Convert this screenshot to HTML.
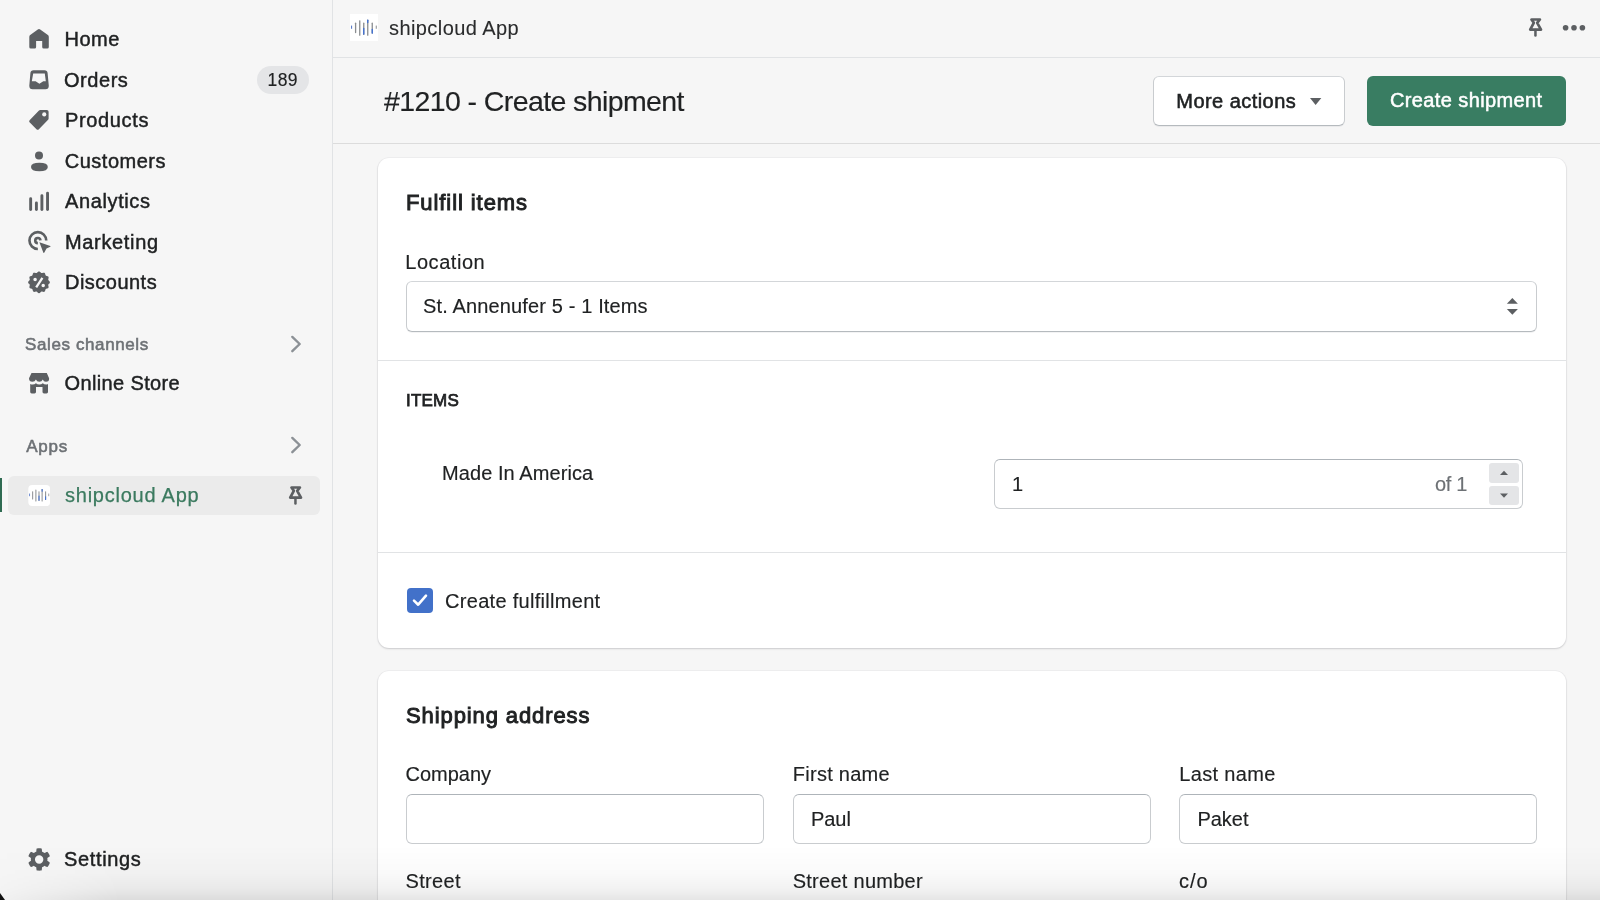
<!DOCTYPE html>
<html><head><meta charset="utf-8">
<style>
*{margin:0;padding:0;box-sizing:border-box}
html,body{width:1600px;height:900px;overflow:hidden;-webkit-font-smoothing:antialiased;background:#f6f6f6;font-family:"Liberation Sans",sans-serif;color:#202223}
.a{position:absolute}
.t{position:absolute;white-space:nowrap;line-height:1;-webkit-text-stroke:0.15px currentColor}
.nav{-webkit-text-stroke:0.45px currentColor}
.f20{font-size:20px}
#side{left:0;top:0;width:333px;height:900px;background:#f6f6f6;border-right:1px solid #e1e3e5}
#topbar{left:333px;top:0;width:1267px;height:58px;border-bottom:1px solid #e1e3e5}
#phead{left:333px;top:58px;width:1267px;height:86px;border-bottom:1px solid #dcdcdc}
.ico{position:absolute;left:29px;width:20px;height:20px}
.card{position:absolute;background:#fff;border-radius:11px;box-shadow:0 0 0 1px rgba(63,63,68,.04),0 1px 2px 0 rgba(63,63,68,.2)}
.inp{position:absolute;background:#fff;border:1px solid #c9cccf;border-top-color:#aeb4b9;border-radius:6px}
.lbl{font-size:20px}
</style></head><body><div id="root" style="position:absolute;left:0;top:0;width:1600px;height:900px;will-change:transform">

<!-- SIDEBAR -->
<div id="side" class="a">

  <svg class="a" style="left:29px;top:29px" width="20" height="20" viewBox="0 0 20 20"><path fill="#5c5f62" d="M0.3,8 Q0.3,6.8 1.2,6.1 L8.8,0.5 Q10,-0.3 11.2,0.5 L18.9,6.1 Q19.8,6.8 19.8,8 V18 Q19.8,19.5 18.3,19.5 H14.7 Q13.2,19.5 13.2,18 V12 H7.1 V18 Q7.1,19.5 5.6,19.5 H1.8 Q0.3,19.5 0.3,18 Z"/></svg>
  <svg class="a" style="left:29px;top:69.5px" width="20" height="20" viewBox="0 0 20 20"><path fill="#5c5f62" fill-rule="evenodd" d="M4.5,0.3 H15.5 Q18.3,0.3 18.6,3 L19.8,15.8 Q19.8,19.3 16.5,19.3 H3.6 Q0.3,19.3 0.3,15.8 L1.4,3 Q1.7,0.3 4.5,0.3 Z M4.2,3.4 H15.8 L16.8,11.3 H14.3 L10.4,13.8 L6.6,11.3 H2.8 Z"/></svg>
  <svg class="a" style="left:29.3px;top:110px" width="19.6" height="20" viewBox="1 1 18 18" preserveAspectRatio="none"><path fill="#5c5f62" stroke="#5c5f62" stroke-width="3.2" stroke-linejoin="round" d="M11.3,2.6 H17.4 V8.7 L8.98,17.12 L2.88,11.02 Z"/><circle cx="15" cy="5" r="1.9" fill="#f6f6f6"/></svg>
  <svg class="a" style="left:29px;top:150.5px" width="20" height="21" viewBox="0 0 20 21"><circle cx="10" cy="4.5" r="4" fill="#5c5f62"/><path fill="#5c5f62" d="M2,16 Q2,11.8 10.4,11.8 Q18.8,11.8 18.8,16 Q18.8,20.2 10.4,20.2 Q2,20.2 2,16 Z"/></svg>
  <svg class="a" style="left:29px;top:191px" width="21" height="21" viewBox="0 0 21 21"><g stroke="#5c5f62" stroke-width="2.9" stroke-linecap="round"><line x1="1.65" y1="7.7" x2="1.65" y2="18.6"/><line x1="7.4" y1="11.9" x2="7.4" y2="18.6"/><line x1="12.9" y1="4.7" x2="12.9" y2="18.6"/><line x1="18.55" y1="2.3" x2="18.55" y2="18.6"/></g></svg>
  <svg class="a" style="left:27px;top:229px" width="26" height="26" viewBox="0 0 26 26"><g fill="none" stroke="#5c5f62" stroke-width="2.6"><path d="M19.25,11.56 A8.4,8.4 0 1 0 10.85,19.96"/><path d="M13.45,11.3 A2.6,2.6 0 1 0 10.85,14.16"/></g><path fill="#5c5f62" d="M12.4,13.3 L23.3,17 Q23.9,17.3 23.3,17.8 L19.5,19.6 L17.2,23.7 Q16.6,24.2 16.3,23.6 Z"/></svg>
  <svg class="a" style="left:27px;top:270px" width="24" height="24" viewBox="0 0 24 24"><path fill="#5c5f62" fill-rule="evenodd" d="M12.00,1.40 L12.28,1.44 L12.56,1.54 L12.83,1.70 L13.09,1.91 L13.34,2.14 L13.57,2.37 L13.80,2.60 L14.02,2.79 L14.25,2.93 L14.48,3.03 L14.74,3.06 L15.00,3.05 L15.29,3.00 L15.60,2.92 L15.92,2.83 L16.25,2.75 L16.58,2.70 L16.89,2.70 L17.19,2.75 L17.45,2.86 L17.68,3.03 L17.87,3.26 L18.02,3.54 L18.14,3.85 L18.24,4.17 L18.32,4.49 L18.41,4.80 L18.51,5.07 L18.63,5.31 L18.79,5.51 L18.99,5.67 L19.23,5.79 L19.50,5.89 L19.81,5.98 L20.13,6.06 L20.45,6.16 L20.76,6.28 L21.04,6.43 L21.27,6.62 L21.44,6.85 L21.55,7.11 L21.60,7.41 L21.60,7.72 L21.55,8.05 L21.47,8.38 L21.38,8.70 L21.30,9.01 L21.25,9.30 L21.24,9.56 L21.27,9.82 L21.37,10.05 L21.51,10.28 L21.70,10.50 L21.93,10.73 L22.16,10.96 L22.39,11.21 L22.60,11.47 L22.76,11.74 L22.86,12.02 L22.90,12.30 L22.86,12.58 L22.76,12.86 L22.60,13.13 L22.39,13.39 L22.16,13.64 L21.93,13.87 L21.70,14.10 L21.51,14.32 L21.37,14.55 L21.27,14.78 L21.24,15.04 L21.25,15.30 L21.30,15.59 L21.38,15.90 L21.47,16.22 L21.55,16.55 L21.60,16.88 L21.60,17.19 L21.55,17.49 L21.44,17.75 L21.27,17.98 L21.04,18.17 L20.76,18.32 L20.45,18.44 L20.13,18.54 L19.81,18.62 L19.50,18.71 L19.23,18.81 L18.99,18.93 L18.79,19.09 L18.63,19.29 L18.51,19.53 L18.41,19.80 L18.32,20.11 L18.24,20.43 L18.14,20.75 L18.02,21.06 L17.87,21.34 L17.68,21.57 L17.45,21.74 L17.19,21.85 L16.89,21.90 L16.58,21.90 L16.25,21.85 L15.92,21.77 L15.60,21.68 L15.29,21.60 L15.00,21.55 L14.74,21.54 L14.48,21.57 L14.25,21.67 L14.02,21.81 L13.80,22.00 L13.57,22.23 L13.34,22.46 L13.09,22.69 L12.83,22.90 L12.56,23.06 L12.28,23.16 L12.00,23.20 L11.72,23.16 L11.44,23.06 L11.17,22.90 L10.91,22.69 L10.66,22.46 L10.43,22.23 L10.20,22.00 L9.98,21.81 L9.75,21.67 L9.52,21.57 L9.26,21.54 L9.00,21.55 L8.71,21.60 L8.40,21.68 L8.08,21.77 L7.75,21.85 L7.42,21.90 L7.11,21.90 L6.81,21.85 L6.55,21.74 L6.32,21.57 L6.13,21.34 L5.98,21.06 L5.86,20.75 L5.76,20.43 L5.68,20.11 L5.59,19.80 L5.49,19.53 L5.37,19.29 L5.21,19.09 L5.01,18.93 L4.77,18.81 L4.50,18.71 L4.19,18.62 L3.87,18.54 L3.55,18.44 L3.24,18.32 L2.96,18.17 L2.73,17.98 L2.56,17.75 L2.45,17.49 L2.40,17.19 L2.40,16.88 L2.45,16.55 L2.53,16.22 L2.62,15.90 L2.70,15.59 L2.75,15.30 L2.76,15.04 L2.73,14.78 L2.63,14.55 L2.49,14.32 L2.30,14.10 L2.07,13.87 L1.84,13.64 L1.61,13.39 L1.40,13.13 L1.24,12.86 L1.14,12.58 L1.10,12.30 L1.14,12.02 L1.24,11.74 L1.40,11.47 L1.61,11.21 L1.84,10.96 L2.07,10.73 L2.30,10.50 L2.49,10.28 L2.63,10.05 L2.73,9.82 L2.76,9.56 L2.75,9.30 L2.70,9.01 L2.62,8.70 L2.53,8.38 L2.45,8.05 L2.40,7.72 L2.40,7.41 L2.45,7.11 L2.56,6.85 L2.73,6.62 L2.96,6.43 L3.24,6.28 L3.55,6.16 L3.87,6.06 L4.19,5.98 L4.50,5.89 L4.77,5.79 L5.01,5.67 L5.21,5.51 L5.37,5.31 L5.49,5.07 L5.59,4.80 L5.68,4.49 L5.76,4.17 L5.86,3.85 L5.98,3.54 L6.13,3.26 L6.32,3.03 L6.55,2.86 L6.81,2.75 L7.11,2.70 L7.42,2.70 L7.75,2.75 L8.08,2.83 L8.40,2.92 L8.71,3.00 L9.00,3.05 L9.26,3.06 L9.52,3.03 L9.75,2.93 L9.98,2.79 L10.20,2.60 L10.43,2.37 L10.66,2.14 L10.91,1.91 L11.17,1.70 L11.44,1.54 L11.72,1.44ZM6.35,9.50 a1.75,1.75 0 1 0 3.5,0 a1.75,1.75 0 1 0 -3.5,0ZM14.45,15.50 a1.75,1.75 0 1 0 3.5,0 a1.75,1.75 0 1 0 -3.5,0ZM10.17,18.02 L16.37,8.42 L14.43,7.18 L8.23,16.78Z"/></svg>
  <svg class="a" style="left:29px;top:372px" width="21" height="22" viewBox="0 0 21 22"><path fill="#5c5f62" d="M2.5,1 H17.8 L20.1,6.3 Q20.4,9.8 17,9.8 Q14.6,9.8 13.8,7.6 Q12.8,9.8 10.3,9.8 Q7.8,9.8 6.9,7.6 Q6,9.8 3.4,9.8 Q0,9.8 0,6.3 Z"/><path fill="#5c5f62" d="M1.2,12 Q2.4,12.6 3.6,12.6 Q5.6,12.6 6.9,11.3 Q8.3,12.6 10.3,12.6 Q12.4,12.6 13.8,11.3 Q15.1,12.6 17.1,12.6 Q18.1,12.6 19,12.1 V20 Q19,21.4 17.5,21.4 H15 Q13.5,21.4 13.5,20 V15 H7 V20 Q7,21.4 5.5,21.4 H2.7 Q1.2,21.4 1.2,20 Z"/></svg>
  <svg class="a" style="left:283px;top:333px" width="22" height="22" viewBox="0 0 22 22"><path d="M9.3,3.9 L16.7,11 L9.3,18.2" fill="none" stroke="#8c9196" stroke-width="2.4" stroke-linecap="round" stroke-linejoin="round"/></svg>
  <svg class="a" style="left:283px;top:434px" width="22" height="22" viewBox="0 0 22 22"><path d="M9.3,3.9 L16.7,11 L9.3,18.2" fill="none" stroke="#8c9196" stroke-width="2.4" stroke-linecap="round" stroke-linejoin="round"/></svg>
  <div class="t f20 nav" style="left:64.6px;top:29px;letter-spacing:0.45px">Home</div>
  <div class="t f20 nav" style="left:64px;top:69.5px;letter-spacing:0.55px">Orders</div>
  <div class="t f20 nav" style="left:64.9px;top:110px;letter-spacing:0.66px">Products</div>
  <div class="t f20 nav" style="left:64.8px;top:150.5px;letter-spacing:0.5px">Customers</div>
  <div class="t f20 nav" style="left:65px;top:191px;letter-spacing:0.62px">Analytics</div>
  <div class="t f20 nav" style="left:65px;top:231.5px;letter-spacing:0.66px">Marketing</div>
  <div class="t f20 nav" style="left:65px;top:272px;letter-spacing:0.48px">Discounts</div>

  <div class="a" style="left:257px;top:66px;width:52px;height:28px;border-radius:14px;background:#e4e5e7"></div>
  <div class="t" style="left:267.6px;top:71.5px;font-size:17.5px;letter-spacing:0.4px">189</div>

  <div class="t" style="left:25px;top:336px;font-size:17px;color:#6d7175;-webkit-text-stroke:0.55px currentColor;letter-spacing:0.61px">Sales channels</div>
  <div class="t f20 nav" style="left:64.6px;top:373px;letter-spacing:0.36px">Online Store</div>
  <div class="t" style="left:26.2px;top:437.5px;font-size:17px;color:#6d7175;-webkit-text-stroke:0.55px currentColor;letter-spacing:0.75px">Apps</div>

  <div class="a" style="left:8px;top:476px;width:312px;height:39px;border-radius:6px;background:#ebebeb"></div>
  <div class="a" style="left:0;top:478px;width:2px;height:34px;background:#2f6b52"></div>
  <svg class="a" style="left:27.8px;top:484.7px" width="22.4" height="21" viewBox="0 0 28 27"><rect width="28" height="27" rx="5" fill="#fff"/><g transform="translate(0,-0.5)"><line x1="1.6" y1="12.0" x2="1.6" y2="14.4" stroke="#4a6fc4" stroke-width="1.0" stroke-linecap="round"/><line x1="5.6" y1="9.2" x2="5.6" y2="18.6" stroke="#8a8d90" stroke-width="1.3" stroke-linecap="round"/><line x1="9.75" y1="6.8" x2="9.75" y2="21.2" stroke="#8a8d90" stroke-width="1.3" stroke-linecap="round"/><line x1="13.75" y1="9.2" x2="13.75" y2="20.4" stroke="#8a8d90" stroke-width="1.3" stroke-linecap="round"/><line x1="17.75" y1="6.2" x2="17.75" y2="21.2" stroke="#8a8d90" stroke-width="1.3" stroke-linecap="round"/><line x1="22.25" y1="9.2" x2="22.25" y2="19.2" stroke="#8a8d90" stroke-width="1.3" stroke-linecap="round"/><line x1="26.25" y1="12.0" x2="26.25" y2="14.4" stroke="#8a8d90" stroke-width="1.0" stroke-linecap="round"/><line x1="13.75" y1="14.5" x2="13.75" y2="20" stroke="#3d6fd6" stroke-width="1.3" stroke-linecap="round"/><line x1="17.75" y1="6.2" x2="17.75" y2="8.5" stroke="#3d6fd6" stroke-width="1.3" stroke-linecap="round"/><line x1="22.25" y1="15.5" x2="22.25" y2="19" stroke="#3d6fd6" stroke-width="1.3" stroke-linecap="round"/></g></svg>
  <svg class="a" style="left:282px;top:480px" width="26" height="30" viewBox="0 0 26 30"><path d="M9.5,7.5 H17.9 L15.2,10.8 L19,17.6 H8.2 L11.8,10.8 Z" fill="none" stroke="#5c5f62" stroke-width="2.7" stroke-linejoin="round"/><line x1="13.45" y1="18" x2="13.45" y2="23.6" stroke="#5c5f62" stroke-width="2.5" stroke-linecap="round"/></svg>
  <div class="t f20" style="left:65px;top:485px;color:#3b7a5f;-webkit-text-stroke:0.25px currentColor;letter-spacing:0.76px">shipcloud App</div>

  <svg class="a" style="left:27px;top:847px" width="24" height="24" viewBox="0 0 24 24"><path fill="#5c5f62" fill-rule="evenodd" d="M20.45,12.44 L20.45,12.58 L20.44,12.73 L20.44,12.87 L20.43,13.02 L20.42,13.16 L20.40,13.31 L20.39,13.45 L20.37,13.60 L20.35,13.74 L20.32,13.88 L20.70,14.10 L21.08,14.34 L21.45,14.59 L21.81,14.85 L22.17,15.12 L22.52,15.41 L22.86,15.71 L22.80,15.90 L22.74,16.09 L22.67,16.27 L22.61,16.45 L22.53,16.64 L22.46,16.82 L22.38,17.00 L22.30,17.17 L22.22,17.35 L22.13,17.52 L22.04,17.70 L21.95,17.87 L21.85,18.04 L21.75,18.21 L21.65,18.38 L21.54,18.54 L21.44,18.70 L21.32,18.86 L21.21,19.02 L21.09,19.18 L20.98,19.34 L20.85,19.49 L20.73,19.64 L20.60,19.79 L20.47,19.93 L20.34,20.08 L19.91,19.93 L19.48,19.77 L19.07,19.60 L18.66,19.42 L18.26,19.22 L17.87,19.02 L17.49,18.80 L17.37,18.89 L17.26,18.98 L17.15,19.07 L17.03,19.15 L16.91,19.24 L16.79,19.32 L16.67,19.40 L16.55,19.48 L16.42,19.55 L16.30,19.63 L16.17,19.70 L16.05,19.77 L15.92,19.84 L15.79,19.90 L15.66,19.96 L15.53,20.02 L15.39,20.08 L15.26,20.14 L15.12,20.19 L14.99,20.24 L14.99,20.68 L14.97,21.12 L14.94,21.57 L14.89,22.01 L14.83,22.46 L14.76,22.91 L14.67,23.35 L14.48,23.40 L14.29,23.43 L14.09,23.47 L13.90,23.50 L13.71,23.53 L13.51,23.56 L13.32,23.58 L13.13,23.60 L12.93,23.61 L12.74,23.62 L12.54,23.63 L12.35,23.64 L12.15,23.64 L11.95,23.64 L11.76,23.63 L11.56,23.62 L11.37,23.61 L11.17,23.60 L10.98,23.58 L10.79,23.56 L10.59,23.53 L10.40,23.50 L10.21,23.47 L10.01,23.43 L9.82,23.40 L9.63,23.35 L9.54,22.91 L9.47,22.46 L9.41,22.01 L9.36,21.57 L9.33,21.12 L9.31,20.68 L9.31,20.24 L9.18,20.19 L9.04,20.14 L8.91,20.08 L8.77,20.02 L8.64,19.96 L8.51,19.90 L8.38,19.84 L8.25,19.77 L8.13,19.70 L8.00,19.63 L7.88,19.55 L7.75,19.48 L7.63,19.40 L7.51,19.32 L7.39,19.24 L7.27,19.15 L7.15,19.07 L7.04,18.98 L6.93,18.89 L6.81,18.80 L6.43,19.02 L6.04,19.22 L5.64,19.42 L5.23,19.60 L4.82,19.77 L4.39,19.93 L3.96,20.08 L3.83,19.93 L3.70,19.79 L3.57,19.64 L3.45,19.49 L3.32,19.34 L3.21,19.18 L3.09,19.02 L2.98,18.86 L2.86,18.70 L2.76,18.54 L2.65,18.38 L2.55,18.21 L2.45,18.04 L2.35,17.87 L2.26,17.70 L2.17,17.52 L2.08,17.35 L2.00,17.17 L1.92,17.00 L1.84,16.82 L1.77,16.64 L1.69,16.45 L1.63,16.27 L1.56,16.09 L1.50,15.90 L1.44,15.71 L1.78,15.41 L2.13,15.12 L2.49,14.85 L2.85,14.59 L3.22,14.34 L3.60,14.10 L3.98,13.88 L3.95,13.74 L3.93,13.60 L3.91,13.45 L3.90,13.31 L3.88,13.16 L3.87,13.02 L3.86,12.87 L3.86,12.73 L3.85,12.58 L3.85,12.44 L3.85,12.30 L3.86,12.15 L3.86,12.01 L3.87,11.86 L3.88,11.72 L3.90,11.57 L3.91,11.43 L3.93,11.28 L3.95,11.14 L3.98,11.00 L3.60,10.78 L3.22,10.54 L2.85,10.29 L2.49,10.03 L2.13,9.76 L1.78,9.47 L1.44,9.17 L1.50,8.98 L1.56,8.79 L1.63,8.61 L1.69,8.43 L1.77,8.24 L1.84,8.06 L1.92,7.88 L2.00,7.71 L2.08,7.53 L2.17,7.36 L2.26,7.18 L2.35,7.01 L2.45,6.84 L2.55,6.67 L2.65,6.50 L2.76,6.34 L2.86,6.18 L2.98,6.02 L3.09,5.86 L3.21,5.70 L3.32,5.54 L3.45,5.39 L3.57,5.24 L3.70,5.09 L3.83,4.95 L3.96,4.80 L4.39,4.95 L4.82,5.11 L5.23,5.28 L5.64,5.46 L6.04,5.66 L6.43,5.86 L6.81,6.08 L6.93,5.99 L7.04,5.90 L7.15,5.81 L7.27,5.73 L7.39,5.64 L7.51,5.56 L7.63,5.48 L7.75,5.40 L7.88,5.33 L8.00,5.25 L8.13,5.18 L8.25,5.11 L8.38,5.04 L8.51,4.98 L8.64,4.92 L8.77,4.86 L8.91,4.80 L9.04,4.74 L9.18,4.69 L9.31,4.64 L9.31,4.20 L9.33,3.76 L9.36,3.31 L9.41,2.87 L9.47,2.42 L9.54,1.97 L9.63,1.53 L9.82,1.48 L10.01,1.45 L10.21,1.41 L10.40,1.38 L10.59,1.35 L10.79,1.32 L10.98,1.30 L11.17,1.28 L11.37,1.27 L11.56,1.26 L11.76,1.25 L11.95,1.24 L12.15,1.24 L12.35,1.24 L12.54,1.25 L12.74,1.26 L12.93,1.27 L13.13,1.28 L13.32,1.30 L13.51,1.32 L13.71,1.35 L13.90,1.38 L14.09,1.41 L14.29,1.45 L14.48,1.48 L14.67,1.53 L14.76,1.97 L14.83,2.42 L14.89,2.87 L14.94,3.31 L14.97,3.76 L14.99,4.20 L14.99,4.64 L15.12,4.69 L15.26,4.74 L15.39,4.80 L15.53,4.86 L15.66,4.92 L15.79,4.98 L15.92,5.04 L16.05,5.11 L16.17,5.18 L16.30,5.25 L16.42,5.33 L16.55,5.40 L16.67,5.48 L16.79,5.56 L16.91,5.64 L17.03,5.73 L17.15,5.81 L17.26,5.90 L17.37,5.99 L17.49,6.08 L17.87,5.86 L18.26,5.66 L18.66,5.46 L19.07,5.28 L19.48,5.11 L19.91,4.95 L20.34,4.80 L20.47,4.95 L20.60,5.09 L20.73,5.24 L20.85,5.39 L20.98,5.54 L21.09,5.70 L21.21,5.86 L21.32,6.02 L21.44,6.18 L21.54,6.34 L21.65,6.50 L21.75,6.67 L21.85,6.84 L21.95,7.01 L22.04,7.18 L22.13,7.36 L22.22,7.53 L22.30,7.71 L22.38,7.88 L22.46,8.06 L22.53,8.24 L22.61,8.43 L22.67,8.61 L22.74,8.79 L22.80,8.98 L22.86,9.17 L22.52,9.47 L22.17,9.76 L21.81,10.03 L21.45,10.29 L21.08,10.54 L20.70,10.78 L20.32,11.00 L20.35,11.14 L20.37,11.28 L20.39,11.43 L20.40,11.57 L20.42,11.72 L20.43,11.86 L20.44,12.01 L20.44,12.15 L20.45,12.30ZM7.95,12.44 a4.2,4.2 0 1 0 8.4,0 a4.2,4.2 0 1 0 -8.4,0Z"/></svg>
  <div class="t f20 nav" style="left:64px;top:849px;letter-spacing:0.64px">Settings</div>
</div>

<!-- TOP BAR -->
<div id="topbar" class="a"></div>
<svg class="a" style="left:350px;top:14px" width="28" height="27" viewBox="0 0 28 27"><rect width="28" height="27" fill="#fff"/><line x1="1.6" y1="12.0" x2="1.6" y2="14.4" stroke="#4a6fc4" stroke-width="1.0" stroke-linecap="round"/><line x1="5.6" y1="9.2" x2="5.6" y2="18.6" stroke="#8a8d90" stroke-width="1.3" stroke-linecap="round"/><line x1="9.75" y1="6.8" x2="9.75" y2="21.2" stroke="#8a8d90" stroke-width="1.3" stroke-linecap="round"/><line x1="13.75" y1="9.2" x2="13.75" y2="20.4" stroke="#8a8d90" stroke-width="1.3" stroke-linecap="round"/><line x1="17.75" y1="6.2" x2="17.75" y2="21.2" stroke="#8a8d90" stroke-width="1.3" stroke-linecap="round"/><line x1="22.25" y1="9.2" x2="22.25" y2="19.2" stroke="#8a8d90" stroke-width="1.3" stroke-linecap="round"/><line x1="26.25" y1="12.0" x2="26.25" y2="14.4" stroke="#8a8d90" stroke-width="1.0" stroke-linecap="round"/><line x1="13.75" y1="14.5" x2="13.75" y2="20" stroke="#3d6fd6" stroke-width="1.3" stroke-linecap="round"/><line x1="17.75" y1="6.2" x2="17.75" y2="8.5" stroke="#3d6fd6" stroke-width="1.3" stroke-linecap="round"/><line x1="22.25" y1="15.5" x2="22.25" y2="19" stroke="#3d6fd6" stroke-width="1.3" stroke-linecap="round"/></svg>
<div class="t f20" style="left:389px;top:17.8px;letter-spacing:0.42px;-webkit-text-stroke:0.1px currentColor;color:#2a2b2c">shipcloud App</div>
<svg class="a" style="left:1521.5px;top:12.2px" width="26" height="30" viewBox="0 0 26 30"><path d="M9.5,7.5 H17.9 L15.2,10.8 L19,17.6 H8.2 L11.8,10.8 Z" fill="none" stroke="#5c5f62" stroke-width="2.7" stroke-linejoin="round"/><line x1="13.45" y1="18" x2="13.45" y2="23.6" stroke="#5c5f62" stroke-width="2.5" stroke-linecap="round"/></svg>
<svg class="a" style="left:1555px;top:20px" width="36" height="16" viewBox="0 0 36 16"><g fill="#5c5f62"><circle cx="10.6" cy="7.7" r="2.8"/><circle cx="19" cy="7.7" r="2.8"/><circle cx="27.4" cy="7.7" r="2.8"/></g></svg>

<!-- PAGE HEADER -->
<div id="phead" class="a"></div>
<div class="t" style="left:384px;top:86.9px;font-size:28.5px;letter-spacing:-0.6px;-webkit-text-stroke:0.15px currentColor">#1210 - Create shipment</div>
<div class="a" style="left:1153px;top:76px;width:192px;height:50px;background:#fff;border:1px solid #c9cccf;border-top-color:#d3d6d9;border-bottom-color:#b5babe;border-radius:6px;box-shadow:0 1px 0 rgba(22,29,37,.05)"></div>
<div class="t f20" style="left:1176.3px;top:90.5px;letter-spacing:0.45px;-webkit-text-stroke:0.55px currentColor">More actions</div>
<svg class="a" style="left:1308px;top:96px" width="16" height="11" viewBox="0 0 16 11"><path d="M2,2 H13.3 L7.65,8.9 Z" fill="#5c5f62"/></svg>
<div class="a" style="left:1367px;top:76px;width:199px;height:50px;background:#397d62;border-radius:6px"></div>
<div class="t f20" style="left:1390px;top:89.8px;color:#fff;letter-spacing:0.38px;-webkit-text-stroke:0.5px currentColor">Create shipment</div>

<!-- CARD 1 -->
<div class="card" style="left:378px;top:158px;width:1188px;height:490px"></div>
<div class="t" style="left:406px;top:192.4px;font-size:22px;-webkit-text-stroke:0.95px currentColor;letter-spacing:0.92px">Fulfill items</div>
<div class="t f20" style="left:405.3px;top:252px;letter-spacing:0.54px">Location</div>
<div class="a" style="left:406px;top:281px;width:1131px;height:51px;background:#fff;border:1px solid #c9cccf;border-top-color:#d3d6d9;border-bottom-color:#b5babe;border-radius:6px;box-shadow:0 1px 0 rgba(22,29,37,.05)"></div>
<div class="t f20" style="left:423px;top:296.4px;letter-spacing:0.14px">St. Annenufer 5 - 1 Items</div>
<svg class="a" style="left:1500px;top:290px" width="26" height="30" viewBox="0 0 26 30"><g fill="#5c5f62"><path d="M12.36,8 L17.87,13.7 H6.84 Z"/><path d="M6.84,19 H17.87 L12.36,24.7 Z"/></g></svg>
<div class="a" style="left:378px;top:360px;width:1188px;height:1px;background:#e1e3e5"></div>
<div class="t" style="left:406px;top:392px;font-size:17px;-webkit-text-stroke:0.75px currentColor;letter-spacing:0.2px">ITEMS</div>
<div class="t f20" style="left:442px;top:463px;letter-spacing:0.08px">Made In America</div>
<div class="inp" style="left:994px;top:459px;width:529px;height:50px"></div>
<div class="t f20" style="left:1012px;top:474.3px">1</div>
<div class="t f20" style="left:1435px;top:474.3px;color:#6d7175;letter-spacing:-0.3px">of 1</div>
<div class="a" style="left:1489px;top:463px;width:30px;height:20px;background:#e4e5e7;border-radius:3px"></div>
<div class="a" style="left:1489px;top:486px;width:30px;height:19px;background:#e4e5e7;border-radius:3px"></div>
<svg class="a" style="left:1496px;top:466px" width="16" height="36" viewBox="0 0 16 36"><g fill="#5c5f62"><path d="M8,4.8 L12,8.9 H4 Z"/><path d="M4,27.5 H12 L8,31.8 Z"/></g></svg>
<div class="a" style="left:378px;top:552px;width:1188px;height:1px;background:#e1e3e5"></div>
<div class="a" style="left:407px;top:588px;width:26px;height:25px;background:#4271c9;border-radius:4px"></div>
<svg class="a" style="left:404px;top:585px" width="32" height="32" viewBox="0 0 32 32"><path d="M10,15.6 L14.2,19.7 L22,10.7" fill="none" stroke="#fff" stroke-width="2.6" stroke-linecap="round" stroke-linejoin="round"/></svg>
<div class="t f20" style="left:445px;top:590.5px;letter-spacing:0.3px">Create fulfillment</div>

<!-- CARD 2 -->
<div class="card" style="left:378px;top:671px;width:1188px;height:300px"></div>
<div class="t" style="left:406px;top:705px;font-size:22px;-webkit-text-stroke:0.95px currentColor;letter-spacing:0.9px">Shipping address</div>
<div class="t f20" style="left:405.5px;top:764px">Company</div>
<div class="t f20" style="left:792.8px;top:764px;letter-spacing:0.26px">First name</div>
<div class="t f20" style="left:1179.3px;top:764px;letter-spacing:0.34px">Last name</div>
<div class="inp" style="left:406px;top:794px;width:358px;height:50px"></div>
<div class="inp" style="left:793px;top:794px;width:358px;height:50px"></div>
<div class="inp" style="left:1179px;top:794px;width:358px;height:50px"></div>
<div class="t f20" style="left:810.9px;top:809px">Paul</div>
<div class="t f20" style="left:1197.4px;top:809px">Paket</div>
<div class="t f20" style="left:405.5px;top:871px;letter-spacing:0.32px">Street</div>
<div class="t f20" style="left:792.7px;top:871px;letter-spacing:0.27px">Street number</div>
<div class="t f20" style="left:1179px;top:871px;letter-spacing:1.0px">c/o</div>

<!-- bottom shadow overlay -->
<div class="a" style="left:0;top:845px;width:1600px;height:55px;background:linear-gradient(to bottom,rgba(0,0,0,0) 0,rgba(0,0,0,.02) 50%,rgba(0,0,0,.05) 80%,rgba(0,0,0,.1) 100%);-webkit-mask-image:linear-gradient(to right,rgba(0,0,0,.2),#000 120px)"></div>
<svg class="a" style="left:0;top:893px" width="6" height="7" viewBox="0 0 6 7"><path d="M0,0 L5,7 H0 Z" fill="#111"/></svg>
</div></body></html>
